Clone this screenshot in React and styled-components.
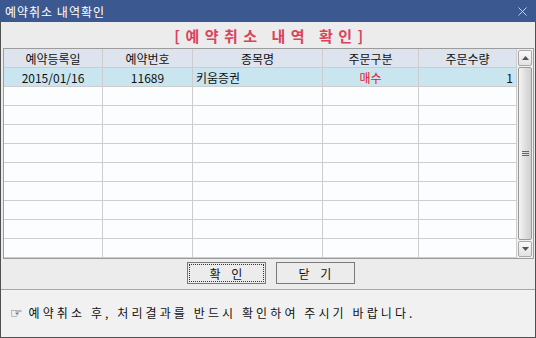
import React from "react";
import styled, { createGlobalStyle } from "styled-components";

const GlobalStyle = createGlobalStyle`
  html, body {
    margin: 0;
    padding: 0;
    background: #ececec;
  }
  body {
    font-family: "Noto Sans CJK KR", "Noto Sans", sans-serif;
  }
`;

const Window = styled.div`
  width: 536px;
  height: 338px;
  box-sizing: border-box;
  border: 1px solid #505050;
  border-top: none;
  display: flex;
  flex-direction: column;
  background: #ececec;
`;

const TitleBar = styled.div`
  height: 22px;
  margin: 0 -1px;
  background: #3c5891;
  display: flex;
  align-items: center;
  justify-content: space-between;
  padding: 0 9px 0 5px;
  color: #ffffff;
  font-size: 12px;
  letter-spacing: 1px;
`;

const Body = styled.div`
  flex: 1;
  display: flex;
  flex-direction: column;
  padding: 0 1px 0 2px;
`;

const Heading = styled.div`
  height: 26px;
  display: flex;
  align-items: center;
  justify-content: center;
  color: #d9435c;
  font-size: 15px;
  font-weight: bold;
  letter-spacing: 5.5px;
  padding-left: 6px;
  white-space: pre;
`;

const GridBox = styled.div`
  display: flex;
  border: 1px solid #9c9c9c;
  background: #fcfdff;
  height: 211px;
  box-sizing: border-box;
`;

const Grid = styled.div`
  display: grid;
  grid-template-columns: 99px 90px 130px 96px 98px;
  grid-auto-rows: 19px;
  align-content: start;
`;

const Cell = styled.div`
  box-sizing: border-box;
  border-right: 1px solid #cdcdcd;
  border-bottom: 1px solid #cdcdcd;
  display: flex;
  align-items: center;
  justify-content: ${(p) =>
    p.$align === "left" ? "flex-start" : p.$align === "right" ? "flex-end" : "center"};
  padding: 0 3px;
  font-size: 12px;
  color: ${(p) => (p.$red ? "#e8141e" : "#111")};
  background: ${(p) => (p.$head ? "#dde4ee" : p.$selected ? "#c9e6f0" : "#fcfdff")};
  white-space: nowrap;
`;

const Scrollbar = styled.div`
  width: 16px;
  display: flex;
  flex-direction: column;
  background: #f0f0f0;
  padding: 1px 0;
  box-sizing: border-box;
  gap: 1px;
`;

const ScrollButton = styled.div`
  height: 16px;
  margin: 0 1px;
  box-sizing: border-box;
  border: 1px solid #a8a8a8;
  border-radius: 2px;
  background: linear-gradient(#fafafa, #e2e2e2);
  display: flex;
  align-items: center;
  justify-content: center;
`;

const Thumb = styled.div`
  flex: 1;
  margin: 0 1px;
  box-sizing: border-box;
  border: 1px solid #9a9a9a;
  border-radius: 2px;
  background: linear-gradient(90deg, #f4f4f4, #dcdcdc 60%, #cfcfcf);
  display: flex;
  align-items: center;
  justify-content: center;
`;

const ButtonRow = styled.div`
  display: flex;
  justify-content: center;
  gap: 10px;
  padding: 3px 0 0 4px;
  height: 30px;
  box-sizing: border-box;
`;

const Button = styled.div`
  width: 79px;
  height: 22px;
  box-sizing: border-box;
  border: 1px solid #7a7a7a;
  background: #ececec;
  display: flex;
  align-items: center;
  justify-content: center;
  font-size: 12px;
  letter-spacing: 4px;
  padding-left: 4px;
  color: #111;
  position: relative;
  ${(p) =>
    p.$focus &&
    `
    &::after {
      content: "";
      position: absolute;
      inset: 1px;
      border: 1px dotted #333;
    }
  `}
`;

const Footer = styled.div`
  flex: 1;
  margin: 0 -1px 0 -2px;
  border-top: 1px solid #a8a8a8;
  background: #f1f1f1;
  display: flex;
  align-items: center;
  padding: 0 0 2px 9px;
  font-size: 12px;
  letter-spacing: 3.1px;
  color: #111;
  white-space: pre;
`;

const Hand = styled.span`
  font-family: "DejaVu Sans", sans-serif;
  font-size: 14px;
  margin-right: 6px;
  letter-spacing: 0;
`;

const headers = ["예약등록일", "예약번호", "종목명", "주문구분", "주문수량"];

const rows = [
  { date: "2015/01/16", no: "11689", name: "키움증권", side: "매수", qty: "1" },
];

const EMPTY_ROWS = 9;

const App = () => {
  return (
    <>
      <GlobalStyle />
      <Window>
        <TitleBar>
          <span>예약취소 내역확인</span>
          <svg width="9" height="9" viewBox="0 0 9 9">
            <path d="M0.5 0.5 L8.5 8.5 M8.5 0.5 L0.5 8.5" stroke="#c8d0e0" strokeWidth="1" />
          </svg>
        </TitleBar>
        <Body>
          <Heading>{"[예약취소 내역 확인]"}</Heading>
          <GridBox>
            <Grid>
              {headers.map((h) => (
                <Cell key={h} $head>
                  {h}
                </Cell>
              ))}
              {rows.map((r) => (
                <React.Fragment key={r.no}>
                  <Cell $selected>{r.date}</Cell>
                  <Cell $selected>{r.no}</Cell>
                  <Cell $selected $align="left">
                    {r.name}
                  </Cell>
                  <Cell $selected $red>
                    {r.side}
                  </Cell>
                  <Cell $selected $align="right">
                    {r.qty}
                  </Cell>
                </React.Fragment>
              ))}
              {Array.from({ length: EMPTY_ROWS * 5 }).map((_, i) => (
                <Cell key={i} />
              ))}
            </Grid>
            <Scrollbar>
              <ScrollButton>
                <svg width="7" height="4" viewBox="0 0 7 4">
                  <path d="M3.5 0 L7 4 L0 4 Z" fill="#555" />
                </svg>
              </ScrollButton>
              <Thumb>
                <svg width="7" height="6" viewBox="0 0 7 6">
                  <path d="M0 0.5 H7 M0 2.5 H7 M0 4.5 H7" stroke="#666" strokeWidth="1" />
                </svg>
              </Thumb>
              <ScrollButton>
                <svg width="7" height="4" viewBox="0 0 7 4">
                  <path d="M0 0 L7 0 L3.5 4 Z" fill="#555" />
                </svg>
              </ScrollButton>
            </Scrollbar>
          </GridBox>
          <ButtonRow>
            <Button $focus>확 인</Button>
            <Button>닫 기</Button>
          </ButtonRow>
          <Footer>
            <Hand>☞</Hand>
            {"예약취소 후, 처리결과를 반드시 확인하여 주시기 바랍니다."}
          </Footer>
        </Body>
      </Window>
    </>
  );
};

export default App;
